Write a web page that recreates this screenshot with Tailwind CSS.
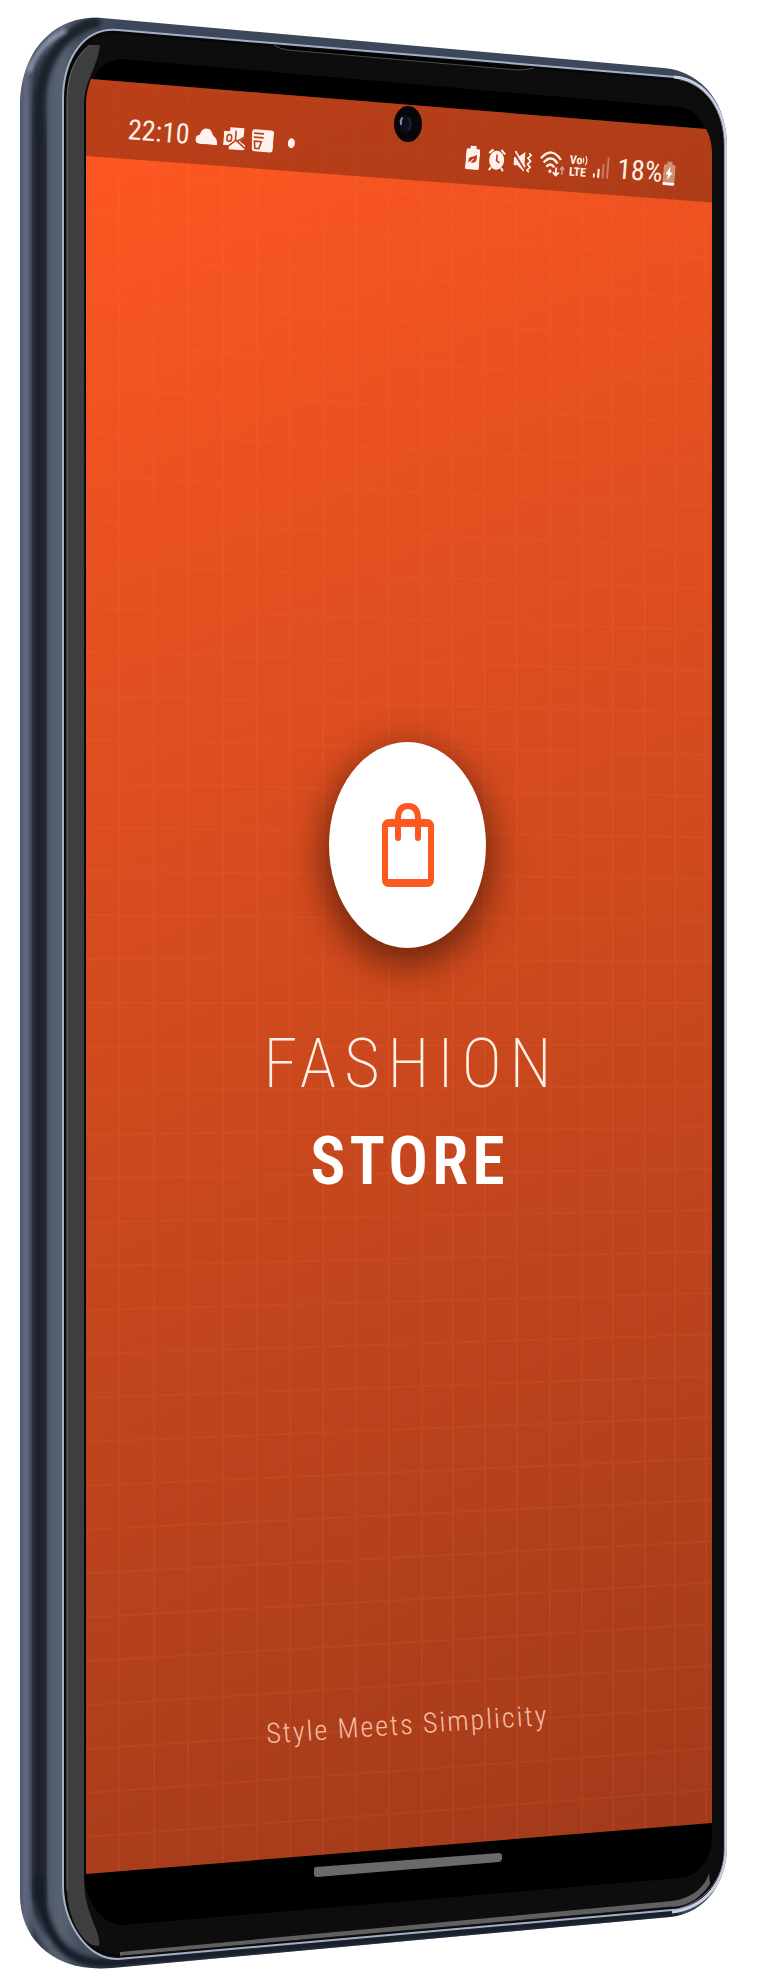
<!DOCTYPE html>
<html lang="en">
<head>
<meta charset="utf-8">
<meta name="viewport" content="width=device-width, initial-scale=1">
<title>Fashion Store</title>
<script src="https://cdn.jsdelivr.net/npm/@tailwindcss/browser@4"></script>
</head>
<body class="bg-white">
<main class="relative w-full overflow-hidden font-['Roboto_Condensed','Roboto',sans-serif] text-[#fff1e8]">
  <!-- phone body, glass and screen -->
  <svg class="absolute inset-0 h-full w-full" viewBox="0 0 767 1984" preserveAspectRatio="none" fill="none" aria-hidden="true">
    <defs>
      <linearGradient id="frame" gradientUnits="userSpaceOnUse" x1="19" y1="0" x2="119" y2="0">
        <stop offset="0" stop-color="#26384d"/><stop offset=".02" stop-color="#4f5c70"/><stop offset=".07" stop-color="#656980"/><stop offset=".12" stop-color="#4b5062"/><stop offset=".16" stop-color="#353b49"/><stop offset=".26" stop-color="#424a59"/><stop offset=".3" stop-color="#515a69"/><stop offset=".42" stop-color="#596270"/><stop offset=".6" stop-color="#465062"/><stop offset="1" stop-color="#3d475a"/>
      </linearGradient>
      <linearGradient id="fadeY" gradientUnits="userSpaceOnUse" x1="0" y1="90" x2="0" y2="1925">
        <stop offset="0" stop-color="#fff" stop-opacity="0"/><stop offset=".03" stop-color="#fff"/><stop offset=".97" stop-color="#fff"/><stop offset="1" stop-color="#fff" stop-opacity="0"/>
      </linearGradient>
      <mask id="railMask" maskUnits="userSpaceOnUse" x="0" y="0" width="767" height="1984"><path d="M0 90H767V1925H0Z" fill="url(#fadeY)"/></mask>
      <linearGradient id="rail" gradientUnits="userSpaceOnUse" x1="32" y1="0" x2="47" y2="0">
        <stop offset="0" stop-color="#2c3240"/><stop offset=".35" stop-color="#1b2029"/><stop offset=".8" stop-color="#1f242e"/><stop offset="1" stop-color="#303744"/>
      </linearGradient>
      <linearGradient id="screen" gradientUnits="userSpaceOnUse" x1="86" y1="120" x2="780" y2="1850">
        <stop offset="0" stop-color="#ff5722"/><stop offset=".5" stop-color="#cd491e"/><stop offset="1" stop-color="#9f391a"/>
      </linearGradient>
      <filter id="soft" filterUnits="userSpaceOnUse" x="0" y="0" width="767" height="1984"><feGaussianBlur stdDeviation="2"/></filter>
      <clipPath id="bodyClip"><path d="M20 1895V105C20 52 54 14 102 18L664 68C704 72 727 105 727 147V1846C727 1881 707 1913 670 1917L112 1968C52 1973 20 1938 20 1895Z"/></clipPath>
      <clipPath id="screenClip"><path d="M91 79L706 129Q712 140 712 154V1823L86 1874V105Q86 92 91 79Z"/></clipPath>
    </defs>
    <g clip-path="url(#bodyClip)">
      <path d="M0 0H767V1984H0Z" fill="url(#frame)"/>
      <path d="M39 1900V110C39 66 60 30 100 21" stroke="#1d222c" stroke-width="11" filter="url(#soft)"/>
      <path d="M32 1925V90H47V1925Z" fill="url(#rail)" mask="url(#railMask)"/>
      <path d="M39 1880C41 1925 58 1966 110 1963L680 1912" stroke="#161c26" stroke-width="9" filter="url(#soft)"/>
      <path d="M29 72C37 49 49 38 66 31" stroke="#a5adcc" stroke-width="4" filter="url(#soft)"/>
      <path d="M26 1890C29 1918 38 1934 50 1946" stroke="#5a627a" stroke-width="4" filter="url(#soft)"/>
      <path d="M63 1885V100C63 58 84 27 118 30L675 77C707 80 725 112 725 145V1850C725 1879 706 1908 672 1910L118 1959C85 1959 63 1920 63 1885Z" fill="#0a0a0a" stroke="#a5afc8" stroke-width="2"/>
      <path d="M674 77C707 80 726 112 726 145V1850C726 1879 707 1908 672 1912" stroke="#cbd0df" stroke-width="3"/>
      <path d="M678 80C707 84 724 112 724 145V1850C724 1875 708 1900 680 1908" stroke="#65708a" stroke-width="1"/>
    </g>
    <path d="M65 1885V100C65 60 86 31 118 33L675 80C705 83 723 113 723 145V1850C723 1878 704 1904 672 1906L118 1955C86 1955 65 1920 65 1885Z" fill="#0d0d0d" stroke="#050505"/>
    <path d="M120 1952L672 1901C694 1898 706 1885 709 1873L710 1884C702 1896 690 1906 672 1907L120 1956Z" fill="#606060"/>
    <path d="M122 1956L672 1907" stroke="#151515"/>
    <path d="M100 45L90 45C74 57 67 77 67 102V1888C67 1915 79 1938 92 1945L99 1946Q100 1938 96 1929C90 1914 84 1900 84 1878V105C84 81 97 69 100 45Z" fill="#3e3e3e"/>
    <path d="M67 1890V102C67 77 74 57 90 45" stroke="#6b6b6b"/>
    <path d="M85 1878V110C86 80 101 59 122 59L680 107C698 109 712 132 712 158V1835C712 1860 698 1877 680 1878L122 1925C104 1926 86 1902 85 1878Z" fill="#000"/>
    <path d="M272 45L288 50L518 70L534 68Z" fill="#020202"/>
    <path d="M274 45Q280 49 288 50L518 70Q524 70 534 68" stroke="#4b4b4b"/>
    <g clip-path="url(#screenClip)">
      <path d="M80 70H720V1880H80Z" fill="url(#screen)"/>
      <path id="gridLines" stroke="#ff8a50" stroke-opacity=".09" stroke-width="2"/>
      <path d="M80 70H720V203L86 156Z" fill="#000" fill-opacity=".27"/>
    </g>
    <ellipse cx="408" cy="124" rx="14" ry="18" fill="#070709"/>
    <ellipse cx="406" cy="124" rx="7" ry="9" fill="#0c0e18"/>
    <path d="M402 118Q400 121 401 124" stroke="#8a90ad" stroke-width="2" stroke-linecap="round"/>
    <path d="M408 118Q412 123 409 129" stroke="#1c2038" stroke-width="2" stroke-linecap="round"/>
    <path d="M316 1867L499 1853Q502 1853 502 1856V1858Q502 1861 499 1862L317 1877Q314 1877 314 1874V1870Q314 1867 316 1867Z" fill="#6a6a6a"/>
  </svg>

  <div class="relative flex flex-col pt-[136px] pr-[91px] pb-[243px] pl-[127px]">
    <header class="flex h-8 rotate-[4.6deg] items-center justify-between text-[28px] leading-8">
      <div class="flex items-center">
        <time class="w-[68px]">22:10</time>
        <svg class="mr-1.5 h-4 w-[22px]" viewBox="0 0 22 16" fill="#fff1ec"><path d="M4 16Q0 15 0 11.500Q0 8 4 7Q5 1 10 0Q15 0 16.500 5Q18 8 20 9Q22 11 22 14V16Z"/></svg>
        <svg class="mr-1.5 h-6 w-[22px]" viewBox="0 0 22 24" fill="#fff1ec"><path d="M6 1H20V11L16 14L22 18V22L20 23H6V19H0V5H6Z"/><path d="M12 4V14L6 19.500M12 13L22 21M22 9L13 15" fill="none" stroke="#ba3f1b" stroke-width="1.500"/><rect x="3.500" y="8.500" width="4.500" height="6.500" rx="2" fill="none" stroke="#ba3f1b" stroke-width="1.600"/></svg>
        <svg class="mr-3.5 h-6 w-[22px]" viewBox="0 0 22 24"><path d="M3 1H19Q22 1 22 4V20Q22 23 19 23H4Q1 23 1 20L0 4Q0 1 3 1Z" fill="#fff1ec"/><path d="M2 5H12M2 9H12M3 13H10L8 20H4Z" fill="none" stroke="#ba3f1b" stroke-width="1.600"/></svg>
        <svg class="h-3 w-2" viewBox="0 0 8 12"><ellipse cx="4" cy="6" rx="3.500" ry="5" fill="#fff1ec"/></svg>
      </div>
      <div class="flex items-center">
        <svg class="mr-2 h-6 w-3.5" viewBox="0 0 14 24"><path d="M4 0H10V3H12Q14 3 14 5V22Q14 24 12 24H2Q0 24 0 22V5Q0 3 2 3H4Z" fill="#fff1ec"/><path d="M3 17Q2 11 7 11L11 9Q12 17 7 17Q5 17 4 16L8 13" fill="#ba3f1b"/><path d="M2 19L8 13" stroke="#fff1ec"/></svg>
        <svg class="mr-2 h-6 w-[18px]" viewBox="0 0 18 24" fill="none"><ellipse cx="9" cy="12.500" rx="7.500" ry="9.500" fill="#fff1ec"/><path d="M1 6L5 2M17 6L13 2M4 20L2 23M14 20L16 23" stroke="#fff1ec" stroke-width="2"/><path d="M9 7V13L12 15" stroke="#ba3f1b" stroke-width="1.600"/></svg>
        <svg class="mr-2 h-6 w-[18px]" viewBox="0 0 18 24" fill="none"><path d="M0 8H4L11 2V22L4 16H0Z" fill="#fff1ec"/><path d="M0 4L12 20" stroke="#ba3f1b" stroke-width="2"/><path d="M1 2L12 17" stroke="#fff1ec" stroke-width="1.800"/><path d="M15 3L17 5L14 8L17 11L14 14L17 17L14 20L16 22" stroke="#fff1ec" stroke-width="1.700"/></svg>
        <svg class="mr-1 h-7 w-[26px]" viewBox="0 0 26 28" fill="none" stroke="#fff1ec" stroke-width="2.300"><path d="M1 9Q11 -4 21 9M4 13Q11 4 18 13M7 17Q11 12 15 17"/><path d="M11 21V21.500" stroke-width="3" stroke-linecap="round"/><path d="M17 17V25M14 22L17 25L20 22" stroke-width="1.800"/><path d="M23 24V17M21 19L23 16L25 19" stroke-opacity=".5" stroke-width="1.600"/></svg>
        <span class="mr-1.5 flex w-[18px] flex-col text-xs leading-3 font-bold whitespace-nowrap"><span class="flex items-center">Vo<svg class="h-2.5 w-1.5" viewBox="0 0 6 10" fill="none" stroke="#fff1ec" stroke-width="1.300"><path d="M0 2Q2 5 0 8M3 0Q6 5 3 10"/></svg></span><span>LTE</span></span>
        <svg class="mr-2 h-6 w-4" viewBox="0 0 16 24" fill="#fff1ec"><path d="M0 18H2V22H0ZM4.500 13H6.500V22H4.500Z"/><path d="M9 8H11V22H9ZM13.500 1H15.500V22H13.500Z" fill-opacity=".35"/></svg>
        <span class="w-[46px]">18%</span>
        <svg class="h-6 w-3" viewBox="0 0 14 24" preserveAspectRatio="none"><path d="M4 0H10V3H12Q14 3 14 5V22Q14 24 12 24H2Q0 24 0 22V5Q0 3 2 3H4Z" fill="#fff1ec" fill-opacity=".45"/><path d="M0 21H14V22Q14 24 12 24H2Q0 24 0 22ZM8 5L3 13H6L5 19L11 11H8Z" fill="#fff"/></svg>
      </div>
    </header>

    <section class="mt-[574px] flex flex-col items-center pl-3">
      <div class="flex h-[206px] w-[157px] items-center justify-center rounded-[50%] bg-white shadow-[0_12px_34px_6px_rgba(50,16,4,0.6)]">
        <svg class="h-[86px] w-[54px]" viewBox="0 0 54 86" fill="none" stroke="#fb5822" stroke-width="6" aria-hidden="true"><path d="M7 17H47Q50 17 50 21V78Q50 82 47 82H7Q4 82 4 78V21Q4 17 7 17Z" stroke="none"/><path fill="#fb5822" stroke="none" fill-rule="evenodd" d="M8 17H46Q53 17 53 25V77Q53 85 46 85H8Q1 85 1 77V25Q1 17 8 17ZM7 25V77H47V25Z"/><path d="M17 36V17Q17 4 27 4Q37 4 37 17V36" stroke-linecap="round"/></svg>
      </div>
      <h1 class="flex flex-col items-center leading-[64px] whitespace-nowrap">
        <span class="mt-[84px] pl-2 text-[68px] font-extralight tracking-[8px]">FASHION</span>
        <span class="mt-[34px] pl-1 text-[66px] font-semibold tracking-[4px] text-white">STORE</span>
      </h1>
      <p class="mt-[515px] -rotate-[3.8deg] text-[28px] leading-8 font-light tracking-[2px] whitespace-nowrap text-[#f5bfa3]">Style Meets Simplicity</p>
    </section>
  </div>
</main>
<script>
  // Grid lines of the splash background; rows converge towards the right edge.
  const columns = [119, 154, 188, 223, 257, 290, 323, 356, 389, 422, 453, 485, 517, 550, 582, 613, 645, 675, 706];
  let d = columns.map(x => `M${x} 70V1880`).join('');
  for (let i = 0; i < 41; i++) {
    const y = 81 + i * 43.9;
    d += `M86 ${y}L712 ${130 + (y - 77) * 0.943}`;
  }
  document.getElementById('gridLines').setAttribute('d', d);
</script>
</body>
</html>
